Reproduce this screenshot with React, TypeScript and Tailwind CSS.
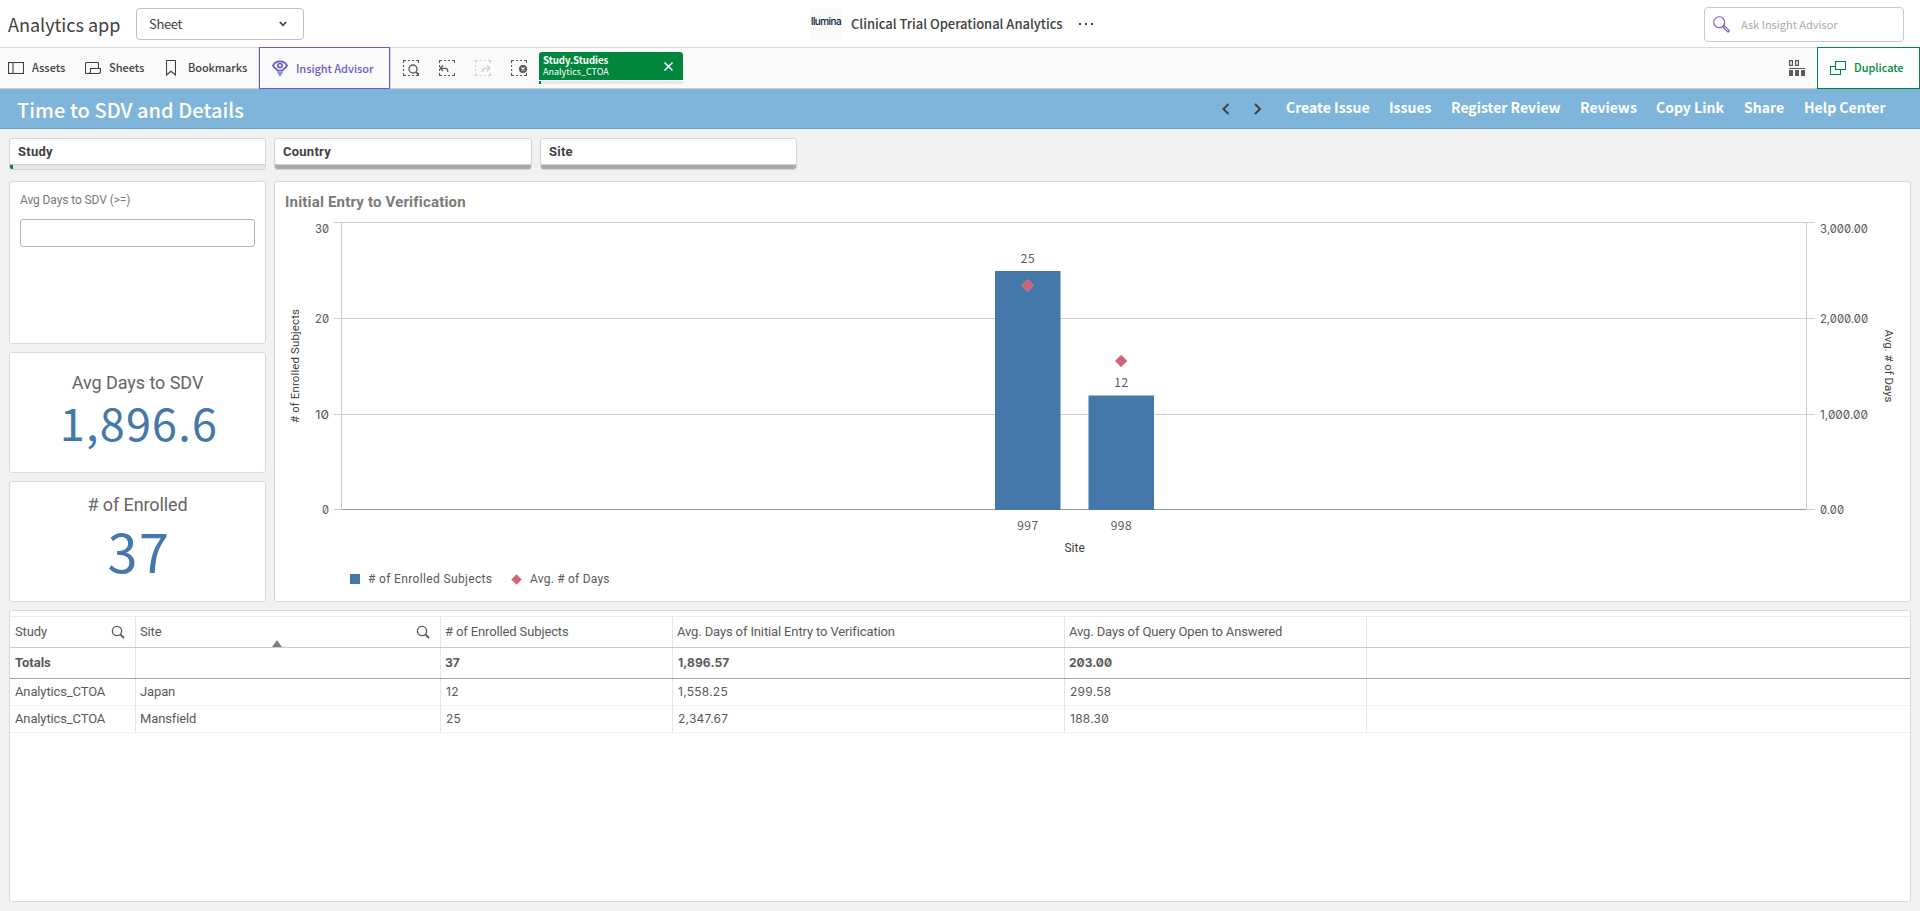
import React from 'react';

const SANS = "font-['Noto_Sans_CJK_JP',sans-serif]";
const NUM = "font-['Inter',sans-serif] slashed-zero";

const navLinks = [
  { label: 'Create Issue', width: 'w-[83px]' },
  { label: 'Issues', width: 'w-[42px]' },
  { label: 'Register Review', width: 'w-[109px]' },
  { label: 'Reviews', width: 'w-[56px]' },
  { label: 'Copy Link', width: 'w-[68px]' },
  { label: 'Share', width: 'w-[40px]' },
  { label: 'Help Center', width: 'w-[82px]' },
];

const sites = [
  { id: '997', enrolled: 25, x: 995, top: 271, dotY: 285.5, labelY: 263 },
  { id: '998', enrolled: 12, x: 1088.5, top: 395.5, dotY: 361, labelY: 387 },
];

const axisTicks = [
  { y: 222.5, textY: 233, left: '30', right: '3,000.00', width: 48 },
  { y: 318.5, textY: 323, left: '20', right: '2,000.00', width: 48 },
  { y: 414.5, textY: 419, left: '10', right: '1,000.00', width: 48 },
  { y: 509.5, textY: 514, left: '0', right: '0.00', width: 24 },
];

const rows = [
  ['Analytics_CTOA', 'Japan', '12', '1,558.25', '299.58'],
  ['Analytics_CTOA', 'Mansfield', '25', '2,347.67', '188.30'],
];

const GRID = 'grid grid-cols-[126px_305px_232px_392px_302px_1fr]';

const TableSearch = () => (
  <svg width="14" height="14" viewBox="0 0 14 14" fill="none" stroke="#595959">
    <circle cx="6" cy="6" r="4.6" strokeWidth="1.3" />
    <path d="M9.3 9.3L13 13" strokeWidth="1.9" />
  </svg>
);

const SelectionIcon: React.FC<{ faded?: boolean; children: React.ReactNode }> = ({ faded, children }) => (
  <svg width="16" height="16" viewBox="0 0 16 16" fill="none" stroke={faded ? '#cfcfcf' : '#595959'}>
    <path
      d="M0 .5H3M5 .5H7M9 .5H11M13 .5H16M.5 0V3M.5 5V7M.5 9V11M.5 13V16M0 15.5H3M5 15.5H7M9 15.5H11M13 15.5H16M15.5 0V3M15.5 13V16"
      strokeWidth="1.2"
    />
    {children}
  </svg>
);

const FilterBox: React.FC<{ label: string; active?: boolean }> = ({ label, active }) => (
  <div className="h-8 bg-white border border-[#d4d4d4] rounded-[3px] flex flex-col overflow-hidden">
    <div className="h-[25px] shrink-0 px-2 text-[13px] leading-[26px] font-bold tracking-[0.25px] text-[#404040] font-['Roboto',sans-serif]">
      {label}
    </div>
    {active ? (
      <div className="h-[5px] border-t border-[#d0d0d0] bg-[#e6e6e6] flex">
        <div className="w-[3px] bg-[#00873d]" />
      </div>
    ) : (
      <div className="h-[5px] border-t border-[#cfcfcf] bg-[#a9a9a9]" />
    )}
  </div>
);

const Header = () => (
  <header className="h-12 shrink-0 bg-white border-b border-[#d9d9d9] grid grid-cols-[810px_894px_1fr] text-[#404040]">
    <div className="flex items-center pl-2">
      <span className="w-32 shrink-0 text-[18px] leading-6 whitespace-nowrap">Analytics app</span>
      <div className="w-[168px] h-8 border border-[#bfbfbf] rounded-[4px] flex items-center justify-between pl-3 pr-4">
        <span className="text-[13px] leading-5 tracking-[-0.35px]">Sheet</span>
        <svg width="8" height="6" viewBox="0 0 8 6" fill="none" stroke="#404040" strokeWidth="1.7">
          <path d="M.8 1L4 4.3 7.2 1" />
        </svg>
      </div>
    </div>
    <div className="flex items-center">
      <div className="w-8 h-8 rounded-[4px] bg-[#fafafa] flex items-center justify-center pb-[5px] overflow-hidden">
        <span className="text-[10px] leading-4 text-[#04202f] font-medium font-['Inter',sans-serif] tracking-[-0.6px]">llumina</span>
      </div>
      <span className="ml-[9px] w-[211px] text-[13px] leading-5 font-medium tracking-[-0.03px] whitespace-nowrap">
        Clinical Trial Operational Analytics
      </span>
      <svg className="ml-[17px]" width="15" height="2" viewBox="0 0 15 2" fill="#404040">
        <path d="M0 0h2v2H0zM6 0h2v2H6zM12 0h2v2h-2z" />
      </svg>
    </div>
    <div className="pt-[7px]">
      <div className="w-[200px] h-[35px] border border-[#c8c8c8] rounded-[4px] flex items-center pl-2 pb-px">
        <svg width="17" height="17" viewBox="0 0 17 17" fill="none" stroke="#655dc6" strokeWidth="1.1">
          <circle cx="6.2" cy="6.2" r="5.4" />
          <path d="M9.8 10.9l1.3-1.3 4.8 4.6a.9.9 0 0 1-1.4 1.4z" />
        </svg>
        <span className="ml-[11px] text-[11px] leading-5 text-[#ababab]">Ask Insight Advisor</span>
      </div>
    </div>
  </header>
);

const Toolbar = () => (
  <div className="h-[41px] shrink-0 bg-[#fafafa] border-b border-[#cfcfcf] flex items-center text-[11px] leading-5 font-medium text-[#404040]">
    <div className="w-[85px] shrink-0 pl-2 flex items-center gap-2">
      <svg width="16" height="12" viewBox="0 0 16 12" fill="none" stroke="#404040" strokeWidth="1.1">
        <rect x=".5" y=".5" width="15" height="11" />
        <path d="M5 .5v11" />
      </svg>
      <span className="pb-0.5">Assets</span>
    </div>
    <div className="w-[73px] shrink-0 flex items-center gap-2">
      <svg width="16" height="12" viewBox="0 0 16 12" fill="none" stroke="#404040" strokeWidth="1.1">
        <path d="M13.5 6V1.5a1 1 0 0 0-1-1h-11a1 1 0 0 0-1 1v9a1 1 0 0 0 1 1h12a2 2 0 0 0 2-2V6.5h-10v3a2 2 0 0 1-2 2" />
      </svg>
      <span className="pb-0.5">Sheets</span>
    </div>
    <div className="w-[101px] shrink-0 h-full pl-2 flex items-center border-r border-[#d9d9d9]">
      <svg width="10" height="16" viewBox="0 0 10 16" fill="none" stroke="#404040" strokeWidth="1.1">
        <path d="M.5 1.2a.7.7 0 0 1 .7-.7h7.6a.7.7 0 0 1 .7.7v13.8L5 11.3.5 15z" />
      </svg>
      <span className="ml-3 pb-0.5 tracking-[-0.1px]">Bookmarks</span>
    </div>
    <div className="w-[131px] shrink-0 h-[42px] -my-px border border-[#655dc6] bg-[#fafafa] flex items-center pl-3 text-[#655dc6]">
      <svg width="16" height="16" viewBox="0 0 16 16" fill="none" stroke="#655dc6">
        <path d="M1 5.6C2.2 3 4.8 1.300 8 1.300s5.800 1.700 7 4.300C14 7.600 11.600 8.700 10.600 10.600H5.400C4.400 8.700 2 7.600 1 5.600z" strokeWidth="1.8" />
        <circle cx="8" cy="5.6" r="2.1" strokeWidth="1.7" />
        <path d="M5.600 13h4.800M6.800 15h2.400" strokeWidth="1.3" />
      </svg>
      <span className="ml-2 tracking-[-0.05px]">Insight Advisor</span>
    </div>
    <div className="h-full border-l border-[#d9d9d9] pl-3 pr-3 flex items-center gap-5">
      <SelectionIcon>
        <circle cx="10" cy="9" r="4" strokeWidth="1.3" />
        <path d="M12.8 11.8L16 15" strokeWidth="1.7" />
      </SelectionIcon>
      <SelectionIcon>
        <path d="M4 5.500L1.200 8.300 4 11M1.500 8.300H6.500Q8.800 8.300 8.800 12" strokeWidth="1.3" />
      </SelectionIcon>
      <SelectionIcon faded>
        <path d="M12 5.500L14.800 8.300 12 11M14.500 8.300H10Q7.500 8.300 7.500 12" strokeWidth="1.3" />
      </SelectionIcon>
      <SelectionIcon>
        <circle cx="12" cy="9" r="4" fill="#595959" stroke="none" />
        <path d="M10.500 7.500l3 3M13.500 7.500l-3 3" stroke="#fff" strokeWidth="1.2" />
      </SelectionIcon>
    </div>
    <div className="w-36 h-8 rounded-t-[3px] bg-white overflow-hidden">
      <div className="h-7 bg-[#00873d] text-white flex items-center justify-between pl-1 pr-[10px]">
        <div className="flex flex-col whitespace-nowrap pt-px">
          <span className="text-[9.7px] leading-[11px] font-bold tracking-[-0.05px]">Study.Studies</span>
          <span className="text-[9px] leading-[12px] font-normal">Analytics_CTOA</span>
        </div>
        <svg width="9" height="9" viewBox="0 0 9 9" stroke="#fff" strokeWidth="1.5">
          <path d="M.5.5l8 8M8.5.5l-8 8" />
        </svg>
      </div>
      <div className="mt-px h-[3px] bg-[#e6e6e6] flex">
        <div className="w-[2px] bg-[#00873d]" />
      </div>
    </div>
    <div className="ml-auto flex items-center h-full">
      <svg width="16" height="16" viewBox="0 0 16 16" fill="none" stroke="#595959">
        <path d="M.6.6h2.800v4.800H.6zM6.600.6h2.800v4.800H6.600z" strokeWidth="1.2" />
        <path d="M0 8.500h16" />
        <path d="M0 10h4v6H0zM6 10h4v6H6zM12 10h4v6h-4z" fill="#595959" stroke="none" />
      </svg>
      <div className="ml-3 w-[103px] h-[42px] -my-px border border-[#00873d] bg-white/70 flex items-center pl-3 text-[#00873d]">
        <svg width="16" height="14" viewBox="0 0 16 14" fill="none" stroke="#00873d" strokeWidth="1.1">
          <rect x="5.5" y=".5" width="10" height="8" />
          <path d="M5.500 5.500h-5v8h10v-5" />
        </svg>
        <span className="ml-2 pb-0.5 tracking-[-0.05px]">Duplicate</span>
      </div>
    </div>
  </div>
);

const SheetTitle = () => (
  <div className="h-10 shrink-0 bg-[#7fb5da] border-b border-[#6fa0c5] flex items-center pl-[17px] text-white">
    <h1 className="w-[1205px] text-[20px] leading-6 font-medium tracking-[0.05px] whitespace-nowrap pt-[3px]">
      Time to SDV and Details
    </h1>
    <svg width="40" height="12" viewBox="0 0 40 12" fill="none" stroke="#404040" strokeWidth="2">
      <path d="M6.500 1L1.500 6l5 5M33 1l5 5-5 5" />
    </svg>
    <nav className="ml-6 flex gap-5 text-[14px] leading-6 font-bold pb-[3px]">
      {navLinks.map((link) => (
        <a key={link.label} className={`${link.width} whitespace-nowrap`}>{link.label}</a>
      ))}
    </nav>
  </div>
);

const Panel: React.FC<{ className?: string; children: React.ReactNode }> = ({ className = '', children }) => (
  <div className={`bg-white border border-[#d9d9d9] rounded-[3px] ${className}`}>{children}</div>
);

const Diamond: React.FC<{ x: number; y: number; r?: number }> = ({ x, y, r = 6 }) => (
  <path
    d={`M${x} ${y - r}L${x + r} ${y}L${x} ${y + r}L${x - r} ${y}z`}
    fill="#cc6677"
    stroke="#f07f95"
    strokeWidth="0.7"
  />
);

const EntryChart = () => (
  <Panel className="flex flex-col font-['Roboto',sans-serif]">
    <h2 className="h-[28px] pl-[10px] pt-[8px] text-[15px] leading-6 font-bold text-[#7b7a78] tracking-[0.18px]">
      Initial Entry to Verification
    </h2>
    <svg className="block" width="1635" height="350" viewBox="275 210 1635 350">
      {axisTicks.map((tick) => (
        <g key={tick.y} fontSize="12" fill="#595959" className={NUM}>
          <path d={`M334 ${tick.y}H1815`} stroke="#cccccc" />
          <text x="329" y={tick.textY} textAnchor="end" textLength={tick.left.length * 7} lengthAdjust="spacingAndGlyphs">
            {tick.left}
          </text>
          <text x="1820" y={tick.textY} textLength={tick.width} lengthAdjust="spacingAndGlyphs">
            {tick.right}
          </text>
        </g>
      ))}
      <path d="M341.5 222V510M1806.5 222V510" stroke="#cccccc" />
      <path d="M342 509.5H1806" stroke="#999999" />
      {sites.map((site) => (
        <g key={site.id} fontSize="12" className={SANS}>
          <rect x={site.x} y={site.top} width="65.5" height={510 - site.top} fill="#4477aa" />
          <Diamond x={site.x + 32.7} y={site.dotY} />
          <text x={site.x + 32.7} y={site.labelY} textAnchor="middle" fill="#595959" textLength="14">
            {site.enrolled}
          </text>
          <text x={site.x + 32.7} y="530" textAnchor="middle" fill="#595959" textLength="21">
            {site.id}
          </text>
        </g>
      ))}
      <text x="1074.7" y="552" textAnchor="middle" fontSize="12" fill="#404040" textLength="20.5">Site</text>
      <text transform="translate(299 366) rotate(-90)" textAnchor="middle" fontSize="11.5" fill="#404040" textLength="114">
        # of Enrolled Subjects
      </text>
      <text transform="translate(1885 366) rotate(90)" textAnchor="middle" fontSize="11.5" fill="#404040" textLength="73">
        Avg. # of Days
      </text>
    </svg>
    <div className="pl-[75px] pt-[9px] flex items-center text-[12px] leading-5 text-[#595959]">
      <span className="w-[10px] h-[10px] bg-[#4477aa]" />
      <span className="ml-2 w-[143px] tracking-[0.35px]"># of Enrolled Subjects</span>
      <svg width="11" height="11" viewBox="0 0 11 11">
        <Diamond x={5.5} y={5.5} r={5} />
      </svg>
      <span className="ml-2 tracking-[0.22px]">Avg. # of Days</span>
    </div>
  </Panel>
);

const DetailTable = () => (
  <Panel className="h-[292px] mt-2 pt-[5px] text-[13px] leading-5 tracking-[-0.13px] text-[#595959] font-['Roboto',sans-serif]">
    <div className={`${GRID} h-8 border-t border-[#ececec] border-b border-b-[#cccccc]`}>
      <div className="pl-[5px] pr-[10px] flex items-center justify-between border-r border-[#e6e6e6]">
        Study
        <TableSearch />
      </div>
      <div className="relative pl-1 pr-[10px] flex items-center justify-between border-r border-[#e6e6e6]">
        Site
        <TableSearch />
        <svg className="absolute left-[136px] bottom-0" width="10" height="7" viewBox="0 0 10 7" fill="#808080">
          <path d="M5 0l5 7H0z" />
        </svg>
      </div>
      <div className="pl-1 flex items-center border-r border-[#e6e6e6]"># of Enrolled Subjects</div>
      <div className="pl-1 flex items-center border-r border-[#e6e6e6]">Avg. Days of Initial Entry to Verification</div>
      <div className="pl-1 flex items-center border-r border-[#e6e6e6]">Avg. Days of Query Open to Answered</div>
    </div>
    <div className={`${GRID} h-[31px] border-b border-[#a6a6a6] font-bold`}>
      <div className="pl-[5px] flex items-center border-r border-[#e6e6e6] tracking-normal">Totals</div>
      <div className="border-r border-[#e6e6e6]" />
      <div className={`pl-1 flex items-center border-r border-[#e6e6e6] text-[12px] tracking-normal ${NUM}`}>37</div>
      <div className={`pl-[5px] flex items-center border-r border-[#e6e6e6] text-[12px] tracking-[0.1px] ${NUM}`}>1,896.57</div>
      <div className={`pl-1 flex items-center border-r border-[#e6e6e6] text-[12px] tracking-normal ${NUM}`}>203.00</div>
    </div>
    {rows.map((row) => (
      <div key={row[1]} className={`${GRID} h-[27px] border-b border-[#f0f0f0]`}>
        {row.map((cell, index) => (
          <div
            key={index}
            className={`flex items-center border-r border-[#e6e6e6] ${index === 1 ? 'pl-1' : 'pl-[5px]'} ${index > 1 ? `text-[12px] tracking-[0.25px] ${NUM}` : ''}`}
          >
            {cell}
          </div>
        ))}
      </div>
    ))}
  </Panel>
);

export default function App() {
  return (
    <div className={`h-[911px] flex flex-col bg-[#f1f1f1] overflow-hidden ${SANS}`}>
      <Header />
      <Toolbar />
      <SheetTitle />
      <main className="pl-[9px] pr-[9px] pt-[9px] flex flex-col">
        <div className="grid grid-cols-[257px_258px_257px] gap-2">
          <FilterBox label="Study" active />
          <FilterBox label="Country" />
          <FilterBox label="Site" />
        </div>
        <div className="mt-[11px] h-[421px] grid grid-cols-[257px_1637px] gap-2">
          <div className="flex flex-col gap-2 font-['Roboto',sans-serif]">
            <Panel className="h-[163px] px-[10px] pt-2">
              <div className="text-[12px] leading-5 tracking-[-0.1px] text-[#7b7a78]">Avg Days to SDV (&gt;=)</div>
              <div className="mt-[9px] h-7 border border-[#b3b3b3] rounded-[3px]" />
            </Panel>
            <Panel className="h-[121px] flex flex-col items-center pt-[18px] text-[#666666]">
              <span className="text-[18px] leading-6 tracking-[-0.05px]">Avg Days to SDV</span>
              <span className={`pl-[3px] text-[45px] leading-[54px] tracking-[1.2px] text-[#4477aa] ${SANS}`}>1,896.6</span>
            </Panel>
            <Panel className="h-[121px] flex flex-col items-center pt-[11px] text-[#666666]">
              <span className="text-[18px] leading-6 tracking-[-0.1px]"># of Enrolled</span>
              <span className={`pl-[3px] text-[54px] leading-[65px] tracking-[1.5px] text-[#4477aa] ${SANS}`}>37</span>
            </Panel>
          </div>
          <EntryChart />
        </div>
        <DetailTable />
      </main>
    </div>
  );
}
